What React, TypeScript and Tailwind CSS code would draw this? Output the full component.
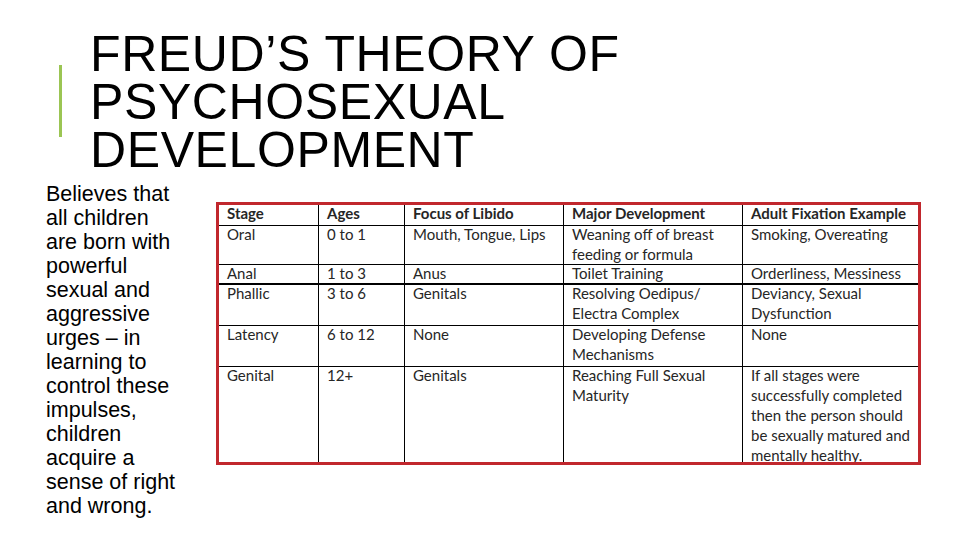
import React from 'react';

type Row = {
    cells: string[][];
    h: string;
    thick?: boolean;
};

const rows: Row[] = [
    { cells: [['Stage'], ['Ages'], ['Focus of Libido'], ['Major Development'], ['Adult Fixation Example']], h: 'h-[21px]' },
    { cells: [['Oral'], ['0 to 1'], ['Mouth, Tongue, Lips'], ['Weaning off of breast', 'feeding or formula'], ['Smoking, Overeating']], h: 'h-[39px]' },
    { cells: [['Anal'], ['1 to 3'], ['Anus'], ['Toilet Training'], ['Orderliness, Messiness']], h: 'h-[20px]', thick: true },
    { cells: [['Phallic'], ['3 to 6'], ['Genitals'], ['Resolving Oedipus/', 'Electra Complex'], ['Deviancy, Sexual', 'Dysfunction']], h: 'h-[41px]' },
    { cells: [['Latency'], ['6 to 12'], ['None'], ['Developing Defense', 'Mechanisms'], ['None']], h: 'h-[41px]' },
    {
        cells: [
            ['Genital'],
            ['12+'],
            ['Genitals'],
            ['Reaching Full Sexual', 'Maturity'],
            ['If all stages were', 'successfully completed', 'then the person should', 'be sexually matured and', 'mentally healthy.'],
        ],
        h: 'flex-1',
    },
];

const StageTable = () => (
    <div className="w-[705px] h-[263px] border-[3px] border-[#c1272d] bg-white overflow-hidden flex flex-col font-['Lato',sans-serif] text-[15px] leading-[20px] text-[#262626]">
        {rows.map((row, i) => (
            <div
                key={i}
                className={`grid grid-cols-[99px_86px_159px_179px_1fr] shrink-0 ${row.h} ${
                    i < rows.length - 1 ? (row.thick ? 'border-b-2 border-black' : 'border-b border-black') : ''
                } ${i === 0 ? 'font-bold' : ''}`}
            >
                {row.cells.map((lines, j) => (
                    <div key={j} className={`pl-[8px] whitespace-nowrap overflow-hidden ${j > 0 ? 'border-l border-black' : ''}`}>
                        <div className="-mt-[2px]">
                            {lines.map((l, k) => (
                                <div key={k}>{l}</div>
                            ))}
                        </div>
                    </div>
                ))}
            </div>
        ))}
    </div>
);

export default function App() {
    return (
        <div className="w-[960px] h-[540px] bg-white overflow-hidden font-['Liberation_Sans',Arial,sans-serif] text-black">
            {/* Title */}
            <div className="flex items-start pt-[30px] pl-[59px]">
                <div className="w-[3px] h-[72px] mt-[35px] bg-[#9bc553]" />
                <h1 className="ml-[28px] text-[50px] leading-[48px] tracking-[0.6px] font-normal">
                    FREUD’S THEORY OF
                    <br />
                    PSYCHOSEXUAL
                    <br />
                    DEVELOPMENT
                </h1>
            </div>

            {/* Body */}
            <div className="flex items-start mt-[8px]">
                <p className="ml-[46px] w-[137px] text-[21.5px] leading-[24px]">
                    Believes that all children are born with powerful sexual and aggressive urges – in learning to control these impulses, children acquire a sense of right and wrong.
                </p>
                <div className="ml-[33px] mt-[20px]">
                    <StageTable />
                </div>
            </div>
        </div>
    );
}
